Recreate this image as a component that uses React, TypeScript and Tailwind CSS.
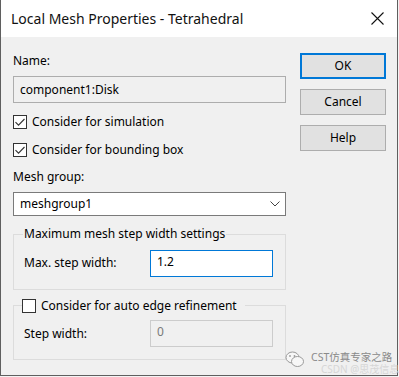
import React from "react";

const font = { fontFamily: '"Noto Sans", "Noto Sans CJK SC", sans-serif' };

function Check({ checked }: { checked: boolean }) {
  return (
    <div className="w-[14px] h-[14px] border border-[#333333] bg-white flex items-center justify-center shrink-0">
      {checked && (
        <svg width="12" height="12" viewBox="0 0 12 12">
          <path d="M1.5 6.2 L4.5 9.2 L10.5 3" fill="none" stroke="#333" strokeWidth="1.1" />
        </svg>
      )}
    </div>
  );
}

function Button({ label, primary }: { label: string; primary?: boolean }) {
  return (
    <div
      className={
        "w-[86px] h-[26px] bg-[#e1e1e1] flex items-center justify-center text-[12px] text-black " +
        (primary ? "border-2 border-[#0078d7]" : "border border-[#adadad]")
      }
    >
      {label}
    </div>
  );
}

export default function App() {
  return (
    <div className="w-[399px] h-[377px] bg-[#f3f3f3] overflow-hidden" style={font}>
      <div className="w-[398px] h-[376px] border-l border-r border-b border-[#5f5f5f] bg-[#f0f0f0] flex flex-col">
        <div className="h-[37px] bg-white flex items-center justify-between pl-[10px] pr-[13px] shrink-0">
          <span className="text-[14px] text-[#111] leading-none">Local Mesh Properties - Tetrahedral</span>
          <svg width="13" height="13" viewBox="0 0 13 13">
            <path d="M0.5 0.5 L12.5 12.5 M12.5 0.5 L0.5 12.5" stroke="#111" strokeWidth="1.1" fill="none" />
          </svg>
        </div>
        <div className="flex flex-1 relative">
          <div className="w-[273px] ml-[12px] flex flex-col text-[12px] text-black">
            <div className="mt-[16px] h-[16px] leading-[16px]">Name:</div>
            <div className="mt-[7px] h-[27px] border border-[#adadad] bg-[#f0f0f0] flex items-center pl-[6px]">
              component1:Disk
            </div>
            <div className="mt-[11px] h-[16px] flex items-center gap-[5px]">
              <Check checked />
              <span className="leading-[16px]">Consider for simulation</span>
            </div>
            <div className="mt-[12px] h-[16px] flex items-center gap-[5px]">
              <Check checked />
              <span className="leading-[16px]">Consider for bounding box</span>
            </div>
            <div className="mt-[11px] h-[16px] leading-[16px]">Mesh group:</div>
            <div className="mt-[7px] h-[24px] border border-[#7a7a7a] bg-white flex items-center justify-between pl-[6px] pr-[5px]">
              <span>meshgroup1</span>
              <svg width="10" height="6" viewBox="0 0 10 6">
                <path d="M0.5 0.5 L5 5 L9.5 0.5" stroke="#444" strokeWidth="1" fill="none" />
              </svg>
            </div>
            <div className="mt-[18px] h-[56px] border border-[#dcdcdc] relative flex items-start justify-between pl-[10px] pr-[12px] pt-[15px]">
              <span className="absolute -top-[9px] left-[9px] px-[1px] bg-[#f0f0f0] leading-[16px]">
                Maximum mesh step width settings
              </span>
              <span className="mt-[5px] leading-[16px]">Max. step width:</span>
              <div className="w-[123px] h-[27px] border border-[#0078d7] bg-white pl-[6px] leading-[22px]">1.2</div>
            </div>
            <div className="mt-[15px] h-[55px] border border-[#dcdcdc] relative flex items-start justify-between pl-[10px] pr-[12px] pt-[14px]">
              <div className="absolute -top-[8px] left-[8px] pr-[8px] bg-[#f0f0f0] flex items-center gap-[5px] h-[16px]">
                <Check checked={false} />
                <span className="leading-[16px]">Consider for auto edge refinement</span>
              </div>
              <span className="mt-[6px] leading-[16px]">Step width:</span>
              <div className="w-[123px] h-[27px] border border-[#cccccc] bg-[#f0f0f0] pl-[6px] leading-[22px] text-[#7a7a7a]">0</div>
            </div>
          </div>
          <div className="ml-[14px] mt-[16px] flex flex-col gap-[10px]">
            <Button label="OK" primary />
            <Button label="Cancel" />
            <Button label="Help" />
          </div>
          <div className="absolute left-[284px] top-[314px] flex items-start gap-[6px] pointer-events-none whitespace-nowrap">
            <svg width="20" height="17" viewBox="0 0 20 17" className="shrink-0">
              <ellipse cx="7.5" cy="6.5" rx="6.5" ry="5.5" fill="#f7f7f7" stroke="#9a9a9a" strokeWidth="1" />
              <ellipse cx="12.5" cy="10.5" rx="6" ry="5" fill="#f7f7f7" stroke="#9a9a9a" strokeWidth="1" />
              <circle cx="5" cy="5" r="0.9" fill="#9a9a9a" />
              <circle cx="9.5" cy="5" r="0.9" fill="#9a9a9a" />
            </svg>
            <div className="flex flex-col">
              <span className="text-[10.5px] leading-[13px] text-[#8a8a8a]">CST仿真专家之路</span>
              <span className="text-[10px] leading-[11px] text-[#d6d6d6] ml-[10px]">CSDN @思茂信息</span>
            </div>
          </div>
        </div>
      </div>
    </div>
  );
}
